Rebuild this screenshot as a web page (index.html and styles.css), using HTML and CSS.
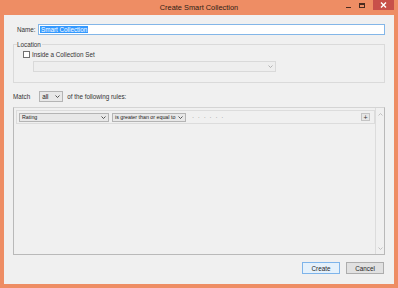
FILE: index.html
```html
<!DOCTYPE html>
<html lang="en">
<head>
    <meta charset="UTF-8">
    <title>Create Smart Collection</title>
    <link rel="stylesheet" href="styles.css">
</head>
<body>
    <div class="window">
        <div class="titlebar">
            <span class="title">Create Smart Collection</span>
            <div class="controls">
                <span class="ctl min"></span>
                <span class="ctl max"></span>
                <span class="ctl close">
                    <svg width="7" height="6" viewBox="0 0 7 6"><path d="M1 0.5 L6 5.5 M6 0.5 L1 5.5" stroke="#fff" stroke-width="1.4"/></svg>
                </span>
            </div>
        </div>

        <div class="content">
            <div class="name-row">
                <label for="collName">Name:</label>
                <div class="name-input"><span class="sel">Smart Collection</span></div>
            </div>

            <fieldset class="location">
                <legend>Location</legend>
                <label class="check"><span class="box"></span>Inside a Collection Set</label>
                <div class="dropdown disabled">
                    <svg class="chev" width="5" height="3" viewBox="0 0 5 3"><path d="M0.5 0.5 L2.5 2.5 L4.5 0.5" fill="none" stroke="#aaa" stroke-width="0.9"/></svg>
                </div>
            </fieldset>

            <div class="match-row">
                <span>Match</span>
                <div class="dropdown small">
                    <span>all</span>
                    <svg class="chev" width="5" height="3" viewBox="0 0 5 3"><path d="M0.5 0.5 L2.5 2.5 L4.5 0.5" fill="none" stroke="#444" stroke-width="0.9"/></svg>
                </div>
                <span>of the following rules:</span>
            </div>

            <div class="rules">
                <div class="rule-list">
                    <div class="rule-row">
                        <div class="dropdown field">
                            <span>Rating</span>
                            <svg class="chev" width="5" height="3" viewBox="0 0 5 3"><path d="M0.5 0.5 L2.5 2.5 L4.5 0.5" fill="none" stroke="#444" stroke-width="0.9"/></svg>
                        </div>
                        <div class="dropdown op">
                            <span>is greater than or equal to</span>
                            <svg class="chev" width="5" height="3" viewBox="0 0 5 3"><path d="M0.5 0.5 L2.5 2.5 L4.5 0.5" fill="none" stroke="#444" stroke-width="0.9"/></svg>
                        </div>
                        <span class="stars">&middot; &middot; &middot; &middot; &middot; &middot;</span>
                        <span class="add">+</span>
                    </div>
                </div>
                <div class="scrollbar">
                    <svg width="5" height="3" viewBox="0 0 5 3"><path d="M0.5 2.5 L2.5 0.5 L4.5 2.5" fill="none" stroke="#bbb" stroke-width="0.9"/></svg>
                    <svg width="5" height="3" viewBox="0 0 5 3"><path d="M0.5 0.5 L2.5 2.5 L4.5 0.5" fill="none" stroke="#bbb" stroke-width="0.9"/></svg>
                </div>
            </div>

            <div class="actions">
                <button class="btn default">Create</button>
                <button class="btn">Cancel</button>
            </div>
        </div>
    </div>
</body>
</html>
```

FILE: styles.css
```css
* { margin: 0; padding: 0; box-sizing: border-box; }
body { font-family: 'Liberation Sans', Arial, sans-serif; font-size: 6.3px; color: #1e1e1e; background: #ee8d64; }

.window {
    width: 398px;
    height: 288px;
    display: flex;
    flex-direction: column;
    background: #ee8d64;
    padding: 0 4px 4px 4px;
}

.titlebar {
    height: 15px;
    display: flex;
    align-items: center;
    justify-content: center;
    position: relative;
}

.title { font-size: 7.4px; color: #2e1d16; margin-top: -1px; }

.controls {
    position: absolute;
    right: 0;
    top: 0;
    display: flex;
    align-items: flex-start;
}

.ctl { display: block; }
.min { width: 5px; height: 1px; background: #4a2c20; margin: 7px 8px 0 0; }
.max { width: 6px; height: 5px; border: 1px solid #4a2c20; border-top-width: 2px; margin: 3px 8px 0 0; }
.close {
    width: 21px;
    height: 10px;
    background: #c8504a;
    display: flex;
    align-items: center;
    justify-content: center;
}

.content {
    flex: 1;
    background: #f0f0f0;
    padding: 9px 9px 0 9px;
    display: flex;
    flex-direction: column;
}

.name-row { display: flex; align-items: center; padding-left: 4px; height: 11px; }
.name-row label { width: 21px; color: #333; }
.name-input {
    flex: 1;
    height: 11px;
    border: 1px solid #83b6e8;
    background: #fff;
    display: flex;
    align-items: center;
    padding-left: 1px;
}
.sel { background: #3399ff; color: #fff; padding: 0 1px; line-height: 7px; }

.location {
    border: 1px solid #dadada;
    margin-top: 7px;
    height: 41px;
    padding: 0 0 0 9px;
}
.location legend { margin-left: -6px; color: #333; line-height: 5px; padding: 0 1px 0 0; }

.check { display: flex; align-items: center; margin-top: 4px; height: 7px; color: #333; }
.box { width: 7px; height: 7px; border: 1px solid #707070; background: #fff; margin-right: 2px; }

.dropdown {
    height: 9px;
    border: 1px solid #b4b4b4;
    background: #e8e8e8;
    display: flex;
    align-items: center;
    justify-content: space-between;
    padding: 0 2px 0 2px;
    color: #222;
    white-space: nowrap;
    line-height: 7px;
}
.dropdown span { font-size: 5.3px; }
.dropdown .chev { flex: none; }
.dropdown.disabled {
    width: 243px;
    height: 11px;
    margin: 3px 0 0 10px;
    border-color: #d9d9d9;
    background: #eeeeee;
    justify-content: flex-end;
}

.match-row { display: flex; align-items: center; margin-top: 8px; height: 11px; color: #333; }
.dropdown.small { width: 24px; height: 11px; margin: 0 4px 0 9px; }
.dropdown.small span { font-size: 6.3px; }

.rules {
    flex: 0 0 148px;
    margin-top: 5px;
    border: 1px solid #b9b9b9;
    border-top-color: #d4d4d4;
    display: flex;
}
.rule-list { flex: 1; padding: 2px 0 0 2px; }
.rule-row {
    height: 14px;
    border: 1px solid #dcdcdc;
    display: flex;
    align-items: center;
    padding-left: 2px;
}
.dropdown.field { width: 90px; }
.dropdown.op { width: 74px; margin-left: 3px; }
.stars { margin-left: 6px; color: #999; letter-spacing: 1px; }
.add {
    margin-left: auto;
    margin-right: 4px;
    width: 9px;
    height: 8px;
    border: 1px solid #c4c4c4;
    background: #e6e6e6;
    display: flex;
    align-items: center;
    justify-content: center;
    font-size: 7px;
    color: #333;
}

.scrollbar {
    width: 9px;
    border-left: 1px solid #dcdcdc;
    display: flex;
    flex-direction: column;
    justify-content: space-between;
    align-items: center;
    padding: 5px 0 4px 0;
}

.actions { display: flex; justify-content: flex-end; gap: 6px; margin-top: 7px; padding-right: 1px; }
.btn {
    width: 38px;
    height: 12px;
    border: 1px solid #adadad;
    background: #e1e1e1;
    font-family: inherit;
    font-size: 6.3px;
    color: #1e1e1e;
}
.btn.default { border-color: #7eb4ea; background: #e5f1fb; }
```
